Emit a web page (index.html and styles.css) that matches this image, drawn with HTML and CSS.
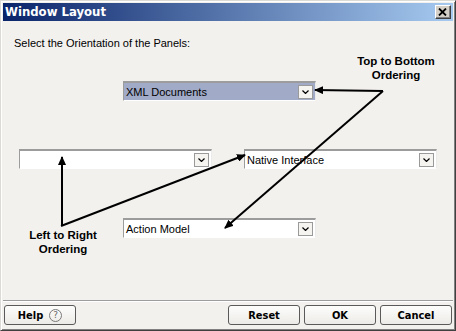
FILE: index.html
```html
<!DOCTYPE html>
<html>
<head>
<meta charset="utf-8">
<link rel="stylesheet" href="styles.css">
</head>
<body>
<div class="window">
  <div class="titlebar">
    <span class="title">Window Layout</span>
    <span class="close"><svg width="9" height="8" viewBox="0 0 9 8"><path d="M1 0.5 L8 7.5 M8 0.5 L1 7.5" stroke="#000" stroke-width="1.8" fill="none"/></svg></span>
  </div>
  <div class="panel">
    <p class="prompt">Select the Orientation of the Panels:</p>
    <div class="diagram">
      <div class="combo combo-xml selected"><span class="value">XML Documents</span><span class="drop"><svg width="7" height="4" viewBox="0 0 7 4"><path d="M0.5 0.5 L3.5 3.5 L6.5 0.5" fill="none" stroke="#000" stroke-width="1.2"/></svg></span></div>
      <div class="combo combo-left"><span class="value"></span><span class="drop"><svg width="7" height="4" viewBox="0 0 7 4"><path d="M0.5 0.5 L3.5 3.5 L6.5 0.5" fill="none" stroke="#000" stroke-width="1.2"/></svg></span></div>
      <div class="combo combo-native"><span class="value">Native Interface</span><span class="drop"><svg width="7" height="4" viewBox="0 0 7 4"><path d="M0.5 0.5 L3.5 3.5 L6.5 0.5" fill="none" stroke="#000" stroke-width="1.2"/></svg></span></div>
      <div class="combo combo-action"><span class="value">Action Model</span><span class="drop"><svg width="7" height="4" viewBox="0 0 7 4"><path d="M0.5 0.5 L3.5 3.5 L6.5 0.5" fill="none" stroke="#000" stroke-width="1.2"/></svg></span></div>
      <div class="label label-top">Top to Bottom<br>Ordering</div>
      <div class="label label-left">Left to Right<br>Ordering</div>
      <svg class="arrows" width="450" height="279" viewBox="0 0 450 279">
        <defs>
          <marker id="ah" markerWidth="9" markerHeight="8" refX="8" refY="4" orient="auto" markerUnits="userSpaceOnUse">
            <path d="M0 0 L9 4 L0 8 Z" fill="#000"/>
          </marker>
        </defs>
        <g stroke="#000" stroke-width="2" fill="none">
          <line x1="380" y1="70" x2="312" y2="69" marker-end="url(#ah)"/>
          <line x1="380" y1="70" x2="222" y2="207" marker-end="url(#ah)"/>
          <line x1="59" y1="205" x2="59" y2="136" marker-end="url(#ah)"/>
          <line x1="58" y1="205" x2="242" y2="134" marker-end="url(#ah)"/>
        </g>
      </svg>
    </div>
  </div>
  <div class="footer">
    <button class="btn"><span>Help</span><span class="help-icon">?</span></button>
    <div class="spacer"></div>
    <button class="btn">Reset</button>
    <button class="btn">OK</button>
    <button class="btn">Cancel</button>
  </div>
</div>
</body>
</html>
```
FILE: styles.css
```css
html, body {
  margin: 0;
  padding: 0;
  background: #f2f1ee;
}
.window {
  width: 456px;
  height: 331px;
  box-sizing: border-box;
  border: 1px solid;
  border-color: #dcdad5 #404040 #404040 #dcdad5;
  box-shadow: inset 1px 1px 0 #ffffff, inset -1px -1px 0 #808080;
  padding: 2px;
  display: flex;
  flex-direction: column;
  background: #f2f1ee;
}
.titlebar {
  height: 18px;
  flex: none;
  background: linear-gradient(to right, #0a246a, #a6caf0);
  display: flex;
  align-items: center;
  padding: 0 2px 0 2px;
  box-sizing: border-box;
}
.title {
  flex: 1;
  color: #fff;
  font-family: "DejaVu Sans Condensed", "DejaVu Sans", sans-serif;
  font-weight: bold;
  font-size: 13px;
  line-height: 18px;
}
.close {
  width: 16px;
  height: 14px;
  box-sizing: border-box;
  background: #d4d0c8;
  border: 1px solid;
  border-color: #ffffff #404040 #404040 #ffffff;
  box-shadow: inset -1px -1px 0 #808080;
  display: flex;
  align-items: center;
  justify-content: center;
  padding-right: 1px;
}
.panel {
  flex: 1;
  display: flex;
  flex-direction: column;
  position: relative;
}
.prompt {
  margin: 0;
  padding: 16px 11px 0 11px;
  font-family: "Liberation Sans", Arial, sans-serif;
  font-size: 11px;
  line-height: 13px;
  color: #000;
}
.diagram {
  position: absolute;
  left: 0;
  top: 0;
  width: 450px;
  height: 279px;
}
.combo {
  position: absolute;
  width: 193px;
  height: 20px;
  box-sizing: border-box;
  background: #fff;
  border-top: 2px solid #9c9c9c;
  border-left: 1px solid #9c9c9c;
  border-right: 1px solid #ebebeb;
  border-bottom: 1px solid #ffffff;
  display: flex;
  align-items: center;
  padding: 0 2px 0 1px;
}
.combo.selected {
  background: #a1aac7;
}
.value {
  flex: 1;
  font-family: "Liberation Sans", Arial, sans-serif;
  font-size: 11px;
  line-height: 14px;
  color: #000;
  padding-left: 1px;
}
.drop {
  width: 15px;
  height: 14px;
  box-sizing: border-box;
  background: #f5f4f1;
  border: 1px solid #9a9a9a;
  display: flex;
  align-items: center;
  justify-content: center;
  padding-top: 1px;
}
.combo-xml { left: 120px; top: 60px; }
.combo-left { left: 16px; top: 128px; }
.combo-native { left: 241px; top: 128px; }
.combo-action { left: 120px; top: 197px; }
.label {
  position: absolute;
  width: 100px;
  text-align: center;
  font-family: "Liberation Sans", Arial, sans-serif;
  font-weight: bold;
  font-size: 11.5px;
  line-height: 14px;
  color: #000;
}
.label-top { left: 343px; top: 33px; }
.label-left { left: 10px; top: 207px; }
.arrows {
  position: absolute;
  left: 0;
  top: 0;
  pointer-events: none;
}
.footer {
  flex: none;
  height: 28px;
  box-sizing: border-box;
  border-top: 1px solid #9d9d9d;
  box-shadow: inset 0 1px 0 #ffffff;
  display: flex;
  align-items: flex-start;
  gap: 4px;
  padding: 4px 1px 0 1px;
}
.spacer { flex: 1; }
.btn {
  width: 72px;
  height: 20px;
  box-sizing: border-box;
  margin: 0;
  padding: 0;
  border: 1px solid #5a5a5a;
  border-radius: 3px;
  background: linear-gradient(to bottom, #fdfdfc, #ecebe7);
  font-family: "DejaVu Sans Condensed", "DejaVu Sans", sans-serif;
  font-weight: bold;
  font-size: 11px;
  color: #000;
  display: flex;
  align-items: center;
  justify-content: center;
  gap: 6px;
}
.help-icon {
  width: 13px;
  height: 13px;
  box-sizing: border-box;
  border: 1px solid #7a7a7a;
  border-radius: 50%;
  font-family: "DejaVu Sans", sans-serif;
  font-weight: normal;
  font-size: 9px;
  line-height: 11px;
  text-align: center;
  color: #666;
}
```
